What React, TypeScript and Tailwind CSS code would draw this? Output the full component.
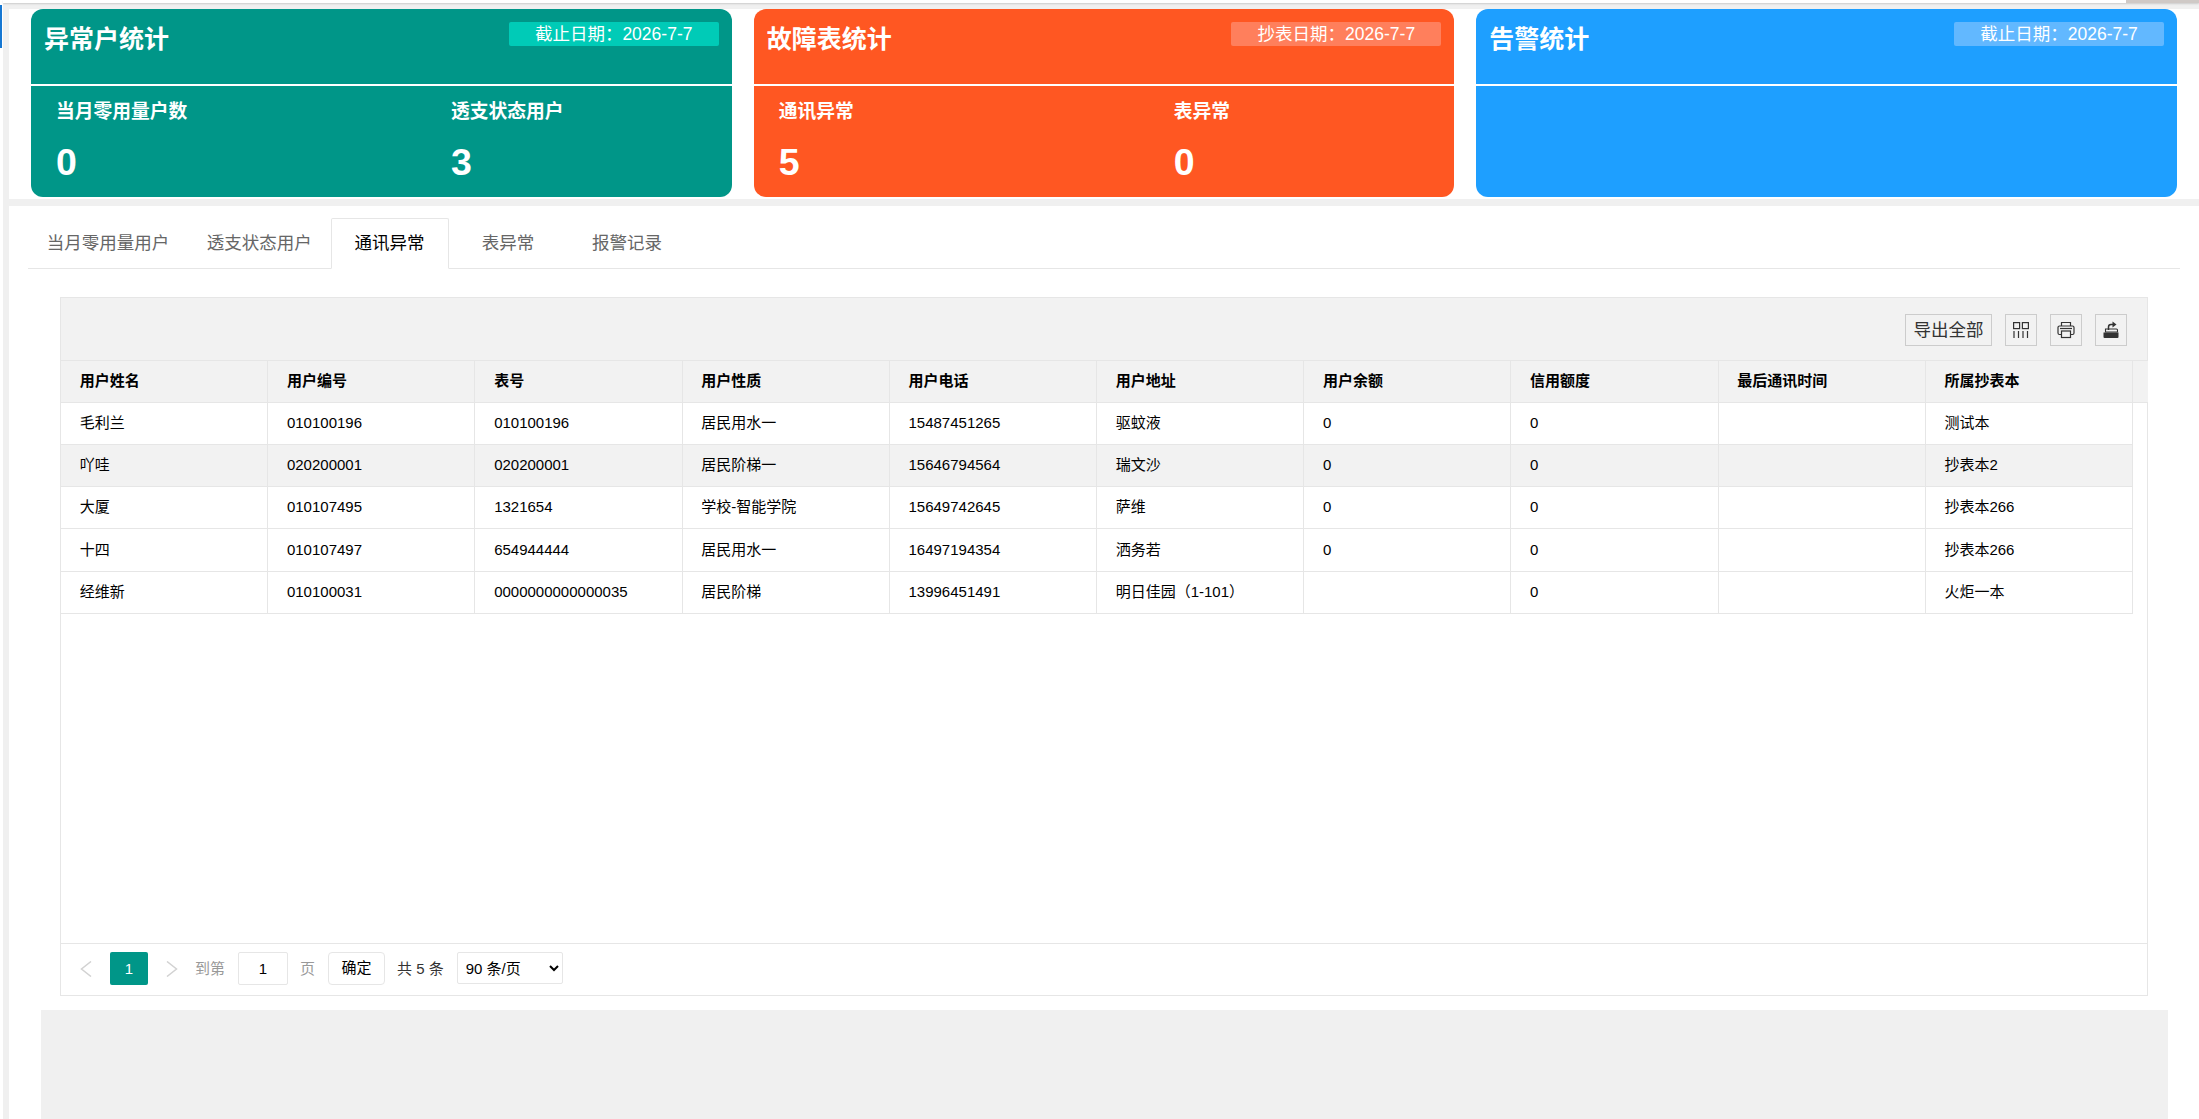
const rows = [
  ['毛利兰', '010100196', '010100196', '居民用水一', '15487451265', '驱蚊液', '0', '0', '', '测试本'],
  ['吖哇', '020200001', '020200001', '居民阶梯一', '15646794564', '瑞文沙', '0', '0', '', '抄表本2'],
  ['大厦', '010107495', '1321654', '学校-智能学院', '15649742645', '萨维', '0', '0', '', '抄表本266'],
  ['十四', '010107497', '654944444', '居民用水一', '16497194354', '洒务若', '0', '0', '', '抄表本266'],
  ['经维新', '010100031', '0000000000000035', '居民阶梯', '13996451491', '明日佳园（1-101）', '', '0', '', '火炬一本'],
]

const headers = ['用户姓名', '用户编号', '表号', '用户性质', '用户电话', '用户地址', '用户余额', '信用额度', '最后通讯时间', '所属抄表本']

function StatCard({ title, tagText, color, tagColor, stats }: {
  title: string
  tagText: string
  color: string
  tagColor: string
  stats: { label: string; value: number }[]
}) {
  return (
    <div className={`flex-1 min-w-0 h-[188px] rounded-[12px] text-white ${color}`}>
      <div className="h-[75px] pl-[13px] pr-[13px] flex justify-between items-start">
        <h2 className="text-[25px] leading-[34px] font-bold mt-[13px]">{title}</h2>
        <div className={`w-[210px] h-[24px] mt-[13px] rounded-[2px] text-[17.5px] leading-[24px] text-center ${tagColor}`}>{tagText}</div>
      </div>
      <div className="h-[2px] bg-white" />
      <div className="grid grid-cols-[395px_1fr] pl-[25px]">
        {stats.map((s) => (
          <div key={s.label} className="pt-[12px]">
            <div className="text-[18.75px] leading-[28px] font-bold">{s.label}</div>
            <div className="text-[37.5px] leading-[44px] font-bold mt-[14px]">{s.value}</div>
          </div>
        ))}
      </div>
    </div>
  )
}

function ToolButton({ children }: { children: React.ReactNode }) {
  return (
    <button className="w-[32px] h-[32px] border border-[#cccccc] flex items-center justify-center text-[#333333]">
      {children}
    </button>
  )
}

function Chevron({ left }: { left?: boolean }) {
  return (
    <svg width="12" height="16" viewBox="0 0 12 16" fill="none" stroke="#d2d2d2" strokeWidth="1.5">
      <polyline points={left ? '11,0.5 1.5,8 11,15.5' : '1,0.5 10.5,8 1,15.5'} />
    </svg>
  )
}

const tabs = ['当月零用量用户', '透支状态用户', '通讯异常', '表异常', '报警记录']

export default function App() {
  return (
    <div className="h-[1119px] overflow-hidden bg-[#f0f0f0] flex text-black font-['Liberation_Sans','Noto_Sans_CJK_SC',sans-serif]">
      <div className="w-[3px] shrink-0 bg-white pt-[5px]">
        <div className="w-[2px] h-[43px] bg-[#1677d2]" />
      </div>

      <div className="flex-1 min-w-0 flex flex-col">
        <div className="h-[3px] shrink-0 bg-white flex justify-end shadow-[0_1px_2px_rgba(0,0,0,0.15)]">
          <div className="w-[73px] bg-[#cfc9c6]" />
        </div>

        <div className="shrink-0 ml-[6px] mt-[6px] h-[190px] bg-white flex gap-[22px] pl-[22px] pr-[22px]">
          <StatCard
            title="异常户统计"
            tagText="截止日期：2026-7-7"
            color="bg-[#009688]"
            tagColor="bg-[#00cbb7]"
            stats={[{ label: '当月零用量户数', value: 0 }, { label: '透支状态用户', value: 3 }]}
          />
          <StatCard
            title="故障表统计"
            tagText="抄表日期：2026-7-7"
            color="bg-[#ff5722]"
            tagColor="bg-[#ff7f5c]"
            stats={[{ label: '通讯异常', value: 5 }, { label: '表异常', value: 0 }]}
          />
          <StatCard
            title="告警统计"
            tagText="截止日期：2026-7-7"
            color="bg-[#1e9fff]"
            tagColor="bg-[#62b8ff]"
            stats={[]}
          />
        </div>

        <div className="flex-1 ml-[6px] mt-[7px] bg-white pt-[12px]">
          <div className="ml-[19px] w-[2152px] h-[51px] border-b border-[#e6e6e6] flex text-[17.5px] text-[#666666]">
            {tabs.map((t, i) => (
              <div
                key={t}
                className={
                  i < 2
                    ? 'px-[18.75px] leading-[50px] whitespace-nowrap'
                    : i === 2
                      ? 'w-[118px] h-[51px] text-center leading-[48px] text-black bg-white border border-b-white border-[#e6e6e6] rounded-t-[2px]'
                      : 'w-[119px] text-center leading-[50px]'
                }
              >
                {t}
              </div>
            ))}
          </div>

          <div className="ml-[51px] mt-[28px] w-[2088px] h-[699px] border border-[#e6e6e6] flex flex-col">
            <div className="h-[63px] shrink-0 bg-[#f2f2f2] border-b border-[#e6e6e6] flex items-start justify-end gap-[13px] pr-[20px] pt-[16px]">
              <button className="w-[87px] h-[32px] border border-[#cccccc] text-[17.5px] leading-[28px] text-[#333333]">导出全部</button>
              <ToolButton>
                <svg width="18" height="18" viewBox="0 0 18 18" fill="none" stroke="currentColor" strokeWidth="1.2">
                  <rect x="1.6" y="1.6" width="6" height="6" />
                  <rect x="10.4" y="1.6" width="6" height="6" />
                  <path d="M2 10v7M6.500 10v7M11 10v7M15.500 10v7" />
                </svg>
              </ToolButton>
              <ToolButton>
                <svg width="18" height="18" viewBox="0 0 18 18" fill="none" stroke="currentColor" strokeWidth="1.2">
                  <path d="M4.500 5V1.500h9V5" />
                  <path d="M4.500 13.500H2.500a1.500 1.500 0 0 1-1.500-1.500V6.500A1.500 1.500 0 0 1 2.500 5h13A1.500 1.500 0 0 1 17 6.500V12a1.500 1.500 0 0 1-1.500 1.500h-2" />
                  <rect x="4.500" y="10" width="9" height="6.500" />
                  <path d="M3 7.500h12" />
                </svg>
              </ToolButton>
              <ToolButton>
                <svg width="18" height="18" viewBox="0 0 18 18">
                  <path d="M3.500 8h11a1 1 0 0 1 1 1v2h-12z" fill="none" stroke="currentColor" strokeWidth="1.100" />
                  <path d="M1.500 11.500h15V16a1 1 0 0 1-1 1h-13a1 1 0 0 1-1-1z" fill="currentColor" />
                  <path d="M6.500 9V6a2.500 2.500 0 0 1 2.500-2.500h2" fill="none" stroke="currentColor" strokeWidth="1.500" />
                  <path d="M10.500 0.500 14.500 3.500l-4 3z" fill="currentColor" />
                </svg>
              </ToolButton>
            </div>

            <div className="flex-1">
              <table className="table-fixed border-separate border-spacing-0 text-[15px] w-[2087px]">
                <colgroup>
                  {headers.map((h) => <col key={h} className="w-[207.2px]" />)}
                  <col className="w-[15px]" />
                </colgroup>
                <thead>
                  <tr className="h-[42px] bg-[#f2f2f2]">
                    {headers.map((h) => (
                      <th key={h} className="px-[18.750px] py-0 text-left font-bold border-r border-b border-[#e6e6e6]">{h}</th>
                    ))}
                    <th className="border-b border-[#e6e6e6]" />
                  </tr>
                </thead>
                <tbody>
                  {rows.map((row, i) => (
                    <tr key={row[0]} className={i === 3 ? 'h-[43px]' : 'h-[42px]'}>
                      {row.map((cell, j) => (
                        <td key={j} className={`px-[18.750px] py-0 border-r border-b border-[#e6e6e6] whitespace-nowrap ${i === 1 ? 'bg-[#f2f2f2]' : ''}`}>{cell}</td>
                      ))}
                      <td />
                    </tr>
                  ))}
                </tbody>
              </table>
            </div>

            <div className="h-[52px] shrink-0 border-t border-[#e6e6e6] flex items-start pt-[8px] pl-[19px] text-[15px]">
              <div className="h-[33px] flex items-center"><Chevron left /></div>
              <div className="ml-[18px] w-[38px] h-[33px] bg-[#009688] rounded-[2px] text-white text-center leading-[33px]">1</div>
              <div className="ml-[18px] h-[33px] flex items-center"><Chevron /></div>
              <span className="ml-[17px] leading-[33px] text-[#999999]">到第</span>
              <input readOnly value="1" className="ml-[13px] w-[50px] h-[33px] border border-[#e6e6e6] rounded-[2px] text-center outline-none" />
              <span className="ml-[12px] leading-[33px] text-[#999999]">页</span>
              <button className="ml-[13px] w-[57px] h-[33px] border border-[#e6e6e6] rounded-[4px] bg-white">确定</button>
              <span className="ml-[12px] leading-[33px] text-[#333333]">共 5 条</span>
              <select className="ml-[13px] w-[106px] h-[32px] border border-[#e6e6e6] rounded-[2px] bg-white pl-[4px]" defaultValue="90">
                <option value="90">90 条/页</option>
              </select>
            </div>
          </div>

          <div className="ml-[32px] mt-[14px] w-[2127px] h-[109px] bg-[#f0f0f0]" />
        </div>
      </div>
    </div>
  )
}
